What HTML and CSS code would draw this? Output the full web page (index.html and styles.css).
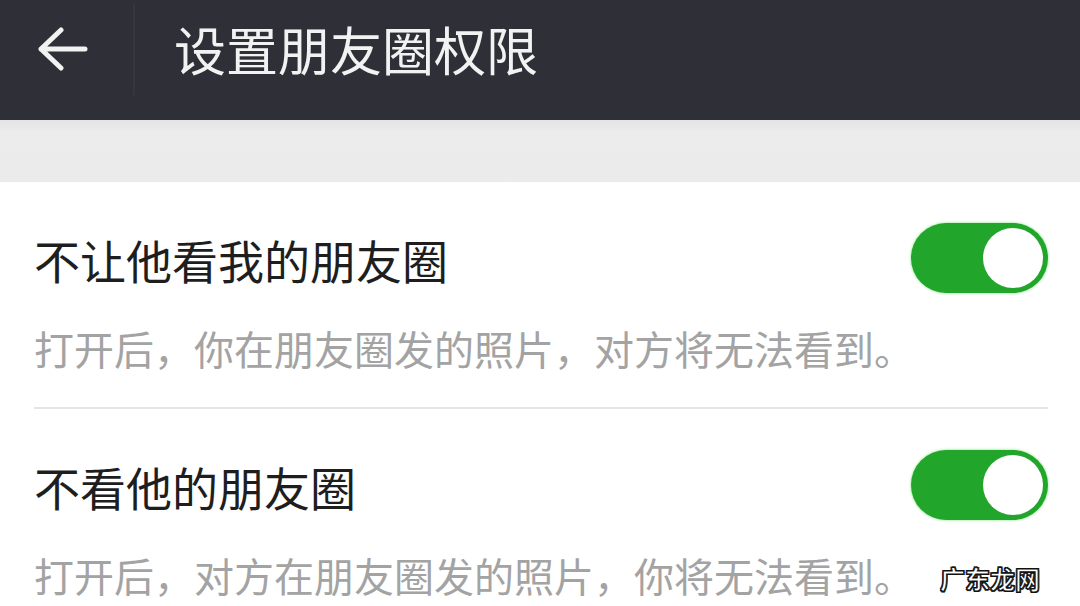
FILE: index.html
```html
<!DOCTYPE html>
<html lang="zh-CN">
<head>
  <meta charset="UTF-8">
  <meta name="viewport" content="width=device-width, initial-scale=1.0">
  <title>设置朋友圈权限</title>
  <link rel="stylesheet" href="styles.css">
</head>
<body>
  <div class="top-bar">
    <span class="back">
      <svg width="52" height="44" viewBox="0 0 52 44">
        <path d="M4 22 H48 M24 3 L4 22 L24 41" fill="none" stroke="#f2f2f2" stroke-width="5" stroke-linecap="round" stroke-linejoin="round"/>
      </svg>
    </span>
    <span class="divider"></span>
    <span class="title">设置朋友圈权限</span>
  </div>

  <div class="gap"></div>

  <div class="list">
    <div class="item">
      <div class="item-head">
        <span class="item-title">不让他看我的朋友圈</span>
        <span class="switch on"><span class="knob"></span></span>
      </div>
      <div class="item-desc">打开后，你在朋友圈发的照片，对方将无法看到。</div>
    </div>
    <div class="item">
      <div class="item-head">
        <span class="item-title">不看他的朋友圈</span>
        <span class="switch on"><span class="knob"></span></span>
      </div>
      <div class="item-desc">打开后，对方在朋友圈发的照片，你将无法看到。</div>
    </div>
  </div>

  <div class="watermark">广东龙网</div>
</body>
</html>
```

FILE: styles.css
```css
html, body {
  margin: 0;
  height: 606px;
  overflow: hidden;
  background: #fff;
  font-family: "Noto Sans CJK SC", "Noto Sans", sans-serif;
}
.top-bar {
  height: 120px;
  background: #2f3037;
  display: flex;
  align-items: center;
}
.back {
  width: 52px;
  height: 44px;
  margin-left: 37px;
  margin-top: -22px;
}
.divider {
  width: 2px;
  height: 92px;
  margin-left: 44px;
  margin-top: -22px;
  background: #36373e;
}
.title {
  margin-left: 39px;
  margin-top: -22px;
  font-size: 52px;
  line-height: 1;
  color: #f2f2f2;
}
.gap {
  height: 62px;
  background: linear-gradient(#e4e4e6, #ececec 20%, #ebebeb);
}
.list {
  margin: 0 32px 0 34px;
}
.item {
  padding: 41px 0 36px;
  border-bottom: 2px solid #e5e5e5;
}
.item:last-child {
  padding-bottom: 0;
  border-bottom: none;
}
.item-head {
  height: 70px;
  display: flex;
  align-items: center;
  justify-content: space-between;
}
.item-title {
  font-size: 46px;
  line-height: 1;
  color: #1e1e1e;
  margin-top: 2px;
}
.switch {
  width: 137px;
  height: 70px;
  border-radius: 35px;
  background: #cfcfcf;
  display: flex;
  align-items: center;
  justify-content: flex-end;
  box-sizing: border-box;
  padding-right: 5px;
}
.switch.on {
  background: #22a52b;
  box-shadow: 0 0 3px #7ee07a;
}
.knob {
  width: 60px;
  height: 60px;
  border-radius: 50%;
  background: #fff;
}
.item-desc {
  margin-top: 32px;
  font-size: 40px;
  line-height: 46px;
  color: #a3a3a3;
}
.watermark {
  position: absolute;
  right: 40px;
  bottom: 15px;
  font-size: 25px;
  font-weight: bold;
  line-height: 1;
  color: #fff;
  -webkit-text-stroke: 1px #111;
  text-shadow: 1px 1px 0 #111, -1px -1px 0 #111, 1px -1px 0 #111, -1px 1px 0 #111;
}
```
